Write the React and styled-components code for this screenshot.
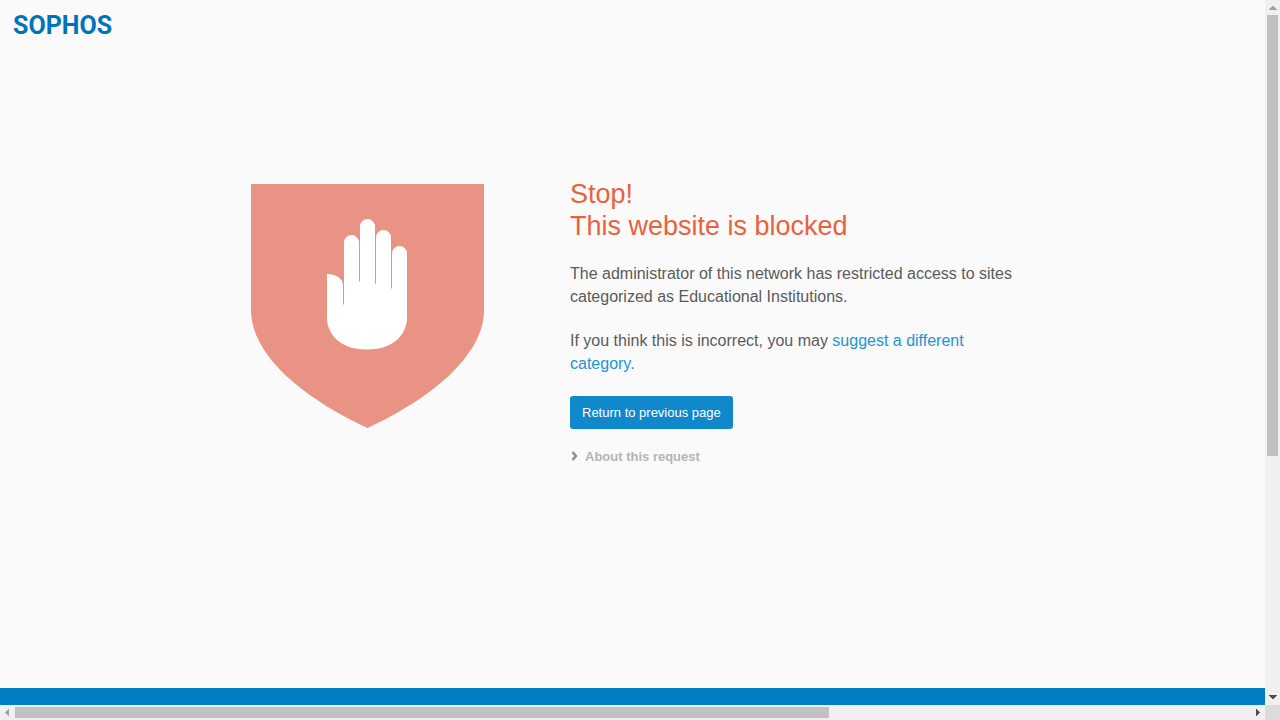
import React from "react";
import styled, { createGlobalStyle } from "styled-components";

const GlobalStyle = createGlobalStyle`
  * { box-sizing: border-box; }
  body {
    margin: 0;
    background: #fafafa;
    color: #5a5a5a;
    font-family: "Liberation Sans", Arial, sans-serif;
    font-size: 16px;
    line-height: 23px;
  }
`;

const Viewport = styled.div`
  display: grid;
  grid-template-columns: minmax(0, 1fr) 15px;
  grid-template-rows: minmax(0, 1fr) 15px;
  height: 100vh;
`;

const Page = styled.div`
  display: flex;
  flex-direction: column;
  overflow: hidden;
`;

const Header = styled.header`
  padding: 8px 12px;
`;

const Logo = styled.svg`
  display: block;
  width: 104px;
  height: 32px;
  fill: #0074b8;
  font-family: Roboto, sans-serif;
  font-size: 25px;
  font-weight: 700;
`;

const Main = styled.main`
  flex: 1;
  display: flex;
  justify-content: center;
  align-items: flex-start;
  gap: 86px;
  padding: 130px 24px 0;
`;

const Shield = styled.svg`
  flex: none;
  width: 233px;
  height: 244px;
  margin-top: 6px;
`;

const Message = styled.section`
  flex: 0 1 444px;
  display: flex;
  flex-direction: column;
  align-items: flex-start;
`;

const Title = styled.h1`
  margin: 0 0 20px;
  color: #e8623f;
  font-size: 27px;
  font-weight: 400;
  line-height: 32px;
`;

const Paragraph = styled.p`
  margin: 0 0 21px;
`;

const Link = styled.a`
  color: #1d95d3;
  text-decoration: none;
`;

const ReturnButton = styled.button`
  height: 33px;
  padding: 0 12px;
  border: 0;
  border-radius: 3px;
  background: #0f88cc;
  color: #fff;
  font-family: inherit;
  font-size: 13px;
  cursor: pointer;
`;

const DetailsButton = styled.button`
  display: flex;
  align-items: center;
  gap: 6px;
  margin-top: 18px;
  padding: 0;
  border: 0;
  background: none;
  color: #b5b5b5;
  font-family: inherit;
  font-size: 13px;
  font-weight: 700;
  line-height: 20px;
  cursor: pointer;
`;

const Chevron = styled.svg`
  width: 9px;
  height: 12px;
  margin-bottom: 2px;
  fill: none;
  stroke: #8c8c98;
  stroke-width: 2.5;
`;

const Footer = styled.footer`
  height: 17px;
  background: #007dc5;
`;

const ScrollBar = styled.div`
  display: flex;
  flex-direction: ${(p) => (p.$vertical ? "column" : "row")};
  background: #f0f0f0;
`;

const ScrollTrack = styled.div`
  flex: 1;
  padding: ${(p) => (p.$vertical ? "0 2px" : "2px 0")};
`;

const ScrollThumb = styled.div`
  width: ${(p) => (p.$vertical ? "100%" : "65.9%")};
  height: ${(p) => (p.$vertical ? "65.3%" : "100%")};
  background: #c1c1c1;
`;

const Arrow = styled.svg`
  flex: none;
  width: 15px;
  height: 15px;
  fill: ${(p) => (p.$active ? "#505050" : "#a3a3a3")};
  shape-rendering: crispEdges;
`;

const Corner = styled.div`
  background: #dcdcdc;
`;

const arrows = {
  up: "M4 10L7.5 6L8 6L12 10Z",
  down: "M4 5H12L8 9H7.5Z",
  left: "M9 4V11L5 7.5Z",
  right: "M6 4V11L10 7.5Z",
};

function Scroll({ vertical }) {
  return (
    <ScrollBar $vertical={vertical} aria-hidden="true">
      <Arrow viewBox="0 0 15 15">
        <path d={vertical ? arrows.up : arrows.left} />
      </Arrow>
      <ScrollTrack $vertical={vertical}>
        <ScrollThumb $vertical={vertical} />
      </ScrollTrack>
      <Arrow viewBox="0 0 15 15" $active>
        <path d={vertical ? arrows.down : arrows.right} />
      </Arrow>
    </ScrollBar>
  );
}

export default function App() {
  return (
    <>
      <GlobalStyle />
      <Viewport>
        <Page>
          <Header>
            <Logo viewBox="0 0 104 32" role="img" aria-label="Sophos">
              <text x="1" y="26">SOPHOS</text>
            </Logo>
          </Header>
          <Main>
            <Shield viewBox="0 0 233 244" aria-hidden="true">
              <path
                fill="#e99384"
                d="M0 0H233V126C233 170 183 213 116.500 244C50 213 0 170 0 126Z"
              />
              <path
                fill="#fff"
                d="M76 90C86 90 92 95 92 101V120.500H93V58.500A7.500 7.500 0 0 1 108 58.500V97.500H109V42.500A7.500 7.500 0 0 1 124 42.500V99.500H125V53.500A7.500 7.500 0 0 1 140 53.500V104.500H141V69.500A7.500 7.500 0 0 1 156 69.500V134C156 149 144 165.500 116 165.500C88 165.500 76 149 76 134Z"
              />
            </Shield>
            <Message>
              <Title>
                Stop!
                <br />
                This website is blocked
              </Title>
              <Paragraph>
                The administrator of this network has restricted access to sites
                categorized as Educational Institutions.
              </Paragraph>
              <Paragraph>
                If you think this is incorrect, you may{" "}
                <Link href="#suggest">suggest a different category.</Link>
              </Paragraph>
              <ReturnButton type="button">Return to previous page</ReturnButton>
              <DetailsButton type="button" aria-expanded="false">
                <Chevron viewBox="0 0 9 12" aria-hidden="true">
                  <path d="M2.500 2L6 6L2.500 10" />
                </Chevron>
                About this request
              </DetailsButton>
            </Message>
          </Main>
          <Footer />
        </Page>
        <Scroll vertical />
        <Scroll />
        <Corner />
      </Viewport>
    </>
  );
}
